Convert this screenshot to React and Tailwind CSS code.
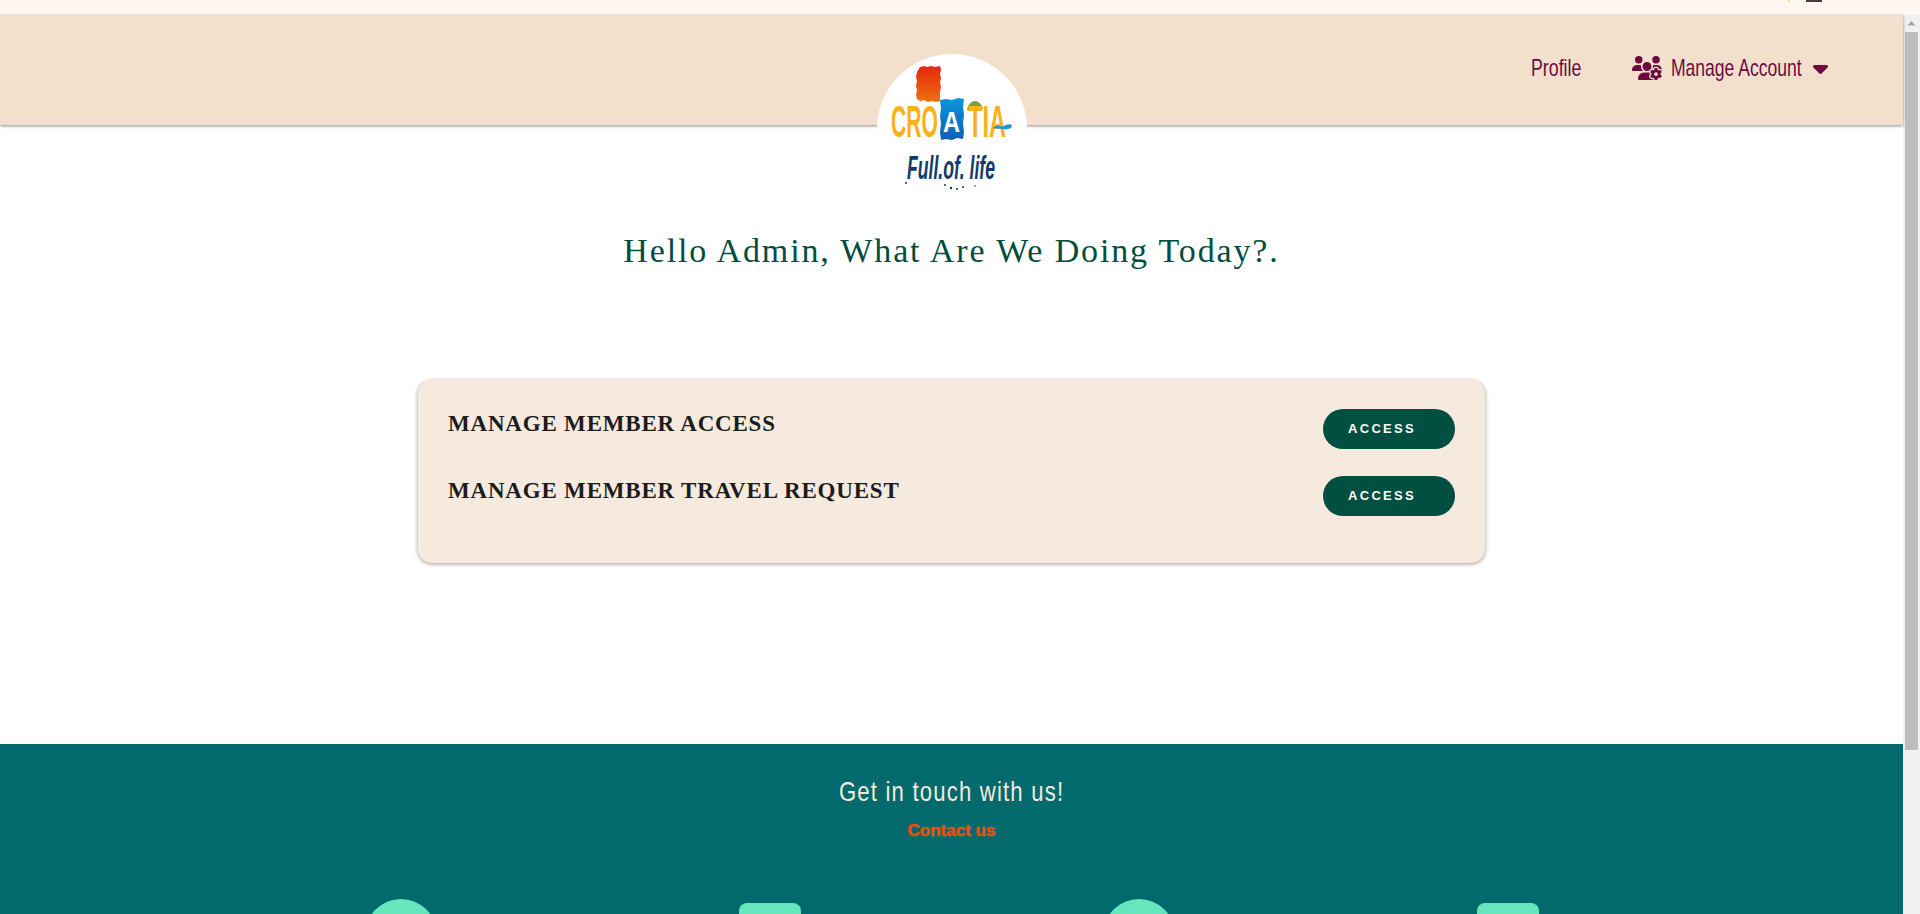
import { FaUsersGear, FaCaretDown } from 'react-icons/fa6'

const CroatiaLogo = () => {
    return (
        <svg viewBox="0 0 150 150" className="h-full w-full">
            <defs>
                <linearGradient id="redSquare" x1="0" y1="0" x2="0" y2="1">
                    <stop offset="0" stopColor="#e2280f" />
                    <stop offset="1" stopColor="#f0700f" />
                </linearGradient>
                <linearGradient id="blueSquare" x1="0" y1="0" x2="0" y2="1">
                    <stop offset="0" stopColor="#0a96dc" />
                    <stop offset="1" stopColor="#0b5fb8" />
                </linearGradient>
            </defs>
            <path d="M43 13l4-1 3 1 4-1 4 1 5-1 1 4-1 4 1 4-1 5 1 4-1 5 0 9-4 1-4-1-4 1-4-2-4 1-3-2-1-4 1-5-1-4 1-5-1-4 1-5z" fill="url(#redSquare)" />
            <path d="M63 46l6-1 6 1 6-2 6 1-1 8 1 8-1 8 1 9-1 7-6-1-5 2-6-1-5 1-1-8 1-8-1-8 1-8z" fill="url(#blueSquare)" />
            <path d="M90 56c1-6 5-9 8-9s7 3 8 8l-6 0-4 0z" fill="#76a03c" />
            <g fontFamily="'Liberation Sans', sans-serif" fontSize="44" fontWeight="700">
                <text x="14" y="83" fill="#fbb117" textLength="47" lengthAdjust="spacingAndGlyphs">CRO</text>
                <text x="66" y="78" fill="#ffffff" fontSize="30" textLength="17" lengthAdjust="spacingAndGlyphs">A</text>
                <text x="91" y="83" fill="#fbb117" textLength="38" lengthAdjust="spacingAndGlyphs">TIA</text>
            </g>
            <path d="M116 74c3-3 5-3 7-2s4 0 6-1 4-1 6 0l-1 3c-3 1-5 2-9 1s-6 0-9-1z" fill="#1b9ad6" />
            <text x="30" y="125" fill="#123a6b" fontFamily="'Liberation Sans', sans-serif" fontSize="33" fontStyle="italic" fontWeight="700" textLength="88" lengthAdjust="spacingAndGlyphs">Full.of. life</text>
            <g fill="#123a6b">
                <circle cx="29" cy="129" r="1" />
                <circle cx="68" cy="131" r="1" />
                <circle cx="74" cy="134" r="1.2" />
                <circle cx="80" cy="135" r="1" />
                <circle cx="86" cy="133" r="1" />
                <circle cx="98" cy="132" r="0.8" />
            </g>
        </svg>
    )
}

const AccessRow = ({ title }) => {
    return (
        <div className="flex h-[67px] items-start justify-between">
            <h3 className="font-['Liberation_Serif',serif] text-[23px] leading-[30px] font-bold tracking-[0.8px] text-[#1c1c1c]">{title}</h3>
            <button
                type="button"
                className="h-10 w-[132px] rounded-full bg-[#004f40] pl-[25px] text-left font-['Liberation_Sans',sans-serif] text-[13px] font-bold tracking-[2.3px] text-white"
            >
                ACCESS
            </button>
        </div>
    )
}

const App = () => {
    return (
        <div className="flex h-[914px] flex-col overflow-hidden bg-white">
            {/* Strip left from the section above */}
            <div className="relative h-[15px] shrink-0 bg-[#fff7f2]">
                <span className="absolute top-0 left-[1788px] h-[2px] w-[2px] bg-[#ffd9a0]"></span>
                <span className="absolute top-0 left-[1806px] h-[2px] w-[16px] bg-[#4a4038]"></span>
            </div>

            <div className="flex min-h-0 flex-1">
                <div className="min-w-0 flex-1">
                    <nav className="relative flex h-[110px] items-start justify-end bg-[#f2e0cc] pt-[38px] pr-[75px] font-['Liberation_Sans',sans-serif] text-[24px] leading-[30px] text-[#6d0a42] shadow-[0_1px_3px_rgba(0,0,0,0.45)]">
                        <div className="absolute top-[39px] left-[877px] h-[150px] w-[150px] rounded-full bg-white">
                            <CroatiaLogo />
                        </div>
                        <a className="mr-[51px] w-[50px] whitespace-nowrap">
                            <span className="inline-block origin-left scale-x-[0.74]">Profile</span>
                        </a>
                        <a className="flex items-center">
                            <FaUsersGear className="mr-[9px] h-[24px] w-[30px]" />
                            <span className="w-[131px] whitespace-nowrap">
                                <span className="inline-block origin-left scale-x-[0.73]">Manage Account</span>
                            </span>
                            <FaCaretDown className="ml-[11px] h-[24px] w-[15px]" />
                        </a>
                    </nav>

                    <h1 className="mt-[101px] text-center font-['Liberation_Serif',serif] text-[34px] leading-[50px] tracking-[1.85px] text-[#004d40]">
                        Hello Admin, What Are We Doing Today?.
                    </h1>

                    <section className="mx-auto mt-[104px] h-[183px] w-[1067px] rounded-[14px] bg-[#f6e9dd] px-[30px] pt-[29px] shadow-[0_1px_4px_rgba(0,0,0,0.4)]">
                        <AccessRow title="MANAGE MEMBER ACCESS" />
                        <AccessRow title="MANAGE MEMBER TRAVEL REQUEST" />
                    </section>

                    <footer className="mt-[181px] h-[400px] bg-[#026a6c] pt-[32px] text-center">
                        <h2 className="font-['Liberation_Sans',sans-serif] text-[28px] leading-[32px] tracking-[1.5px] text-[#f6e9dd]">
                            <span className="inline-block scale-x-[0.79]">Get in touch with us!</span>
                        </h2>
                        <p className="mt-[13px] font-['Liberation_Sans',sans-serif] text-[17px] leading-[20px] font-bold text-[#e8500f] [-webkit-text-stroke:0.5px_#e8500f]">
                            Contact us
                        </p>
                        <div className="mx-auto mt-[58px] grid w-[1482px] grid-cols-4 justify-items-center pl-[6px]">
                            <div className="h-[72px] w-[72px] rounded-full bg-[#66e6bc]"></div>
                            <div className="mt-1 h-[62px] w-[62px] rounded-lg bg-[#66e6bc]"></div>
                            <div className="h-[72px] w-[72px] rounded-full bg-[#66e6bc]"></div>
                            <div className="mt-1 h-[62px] w-[62px] rounded-lg bg-[#66e6bc]"></div>
                        </div>
                    </footer>
                </div>

                {/* Scrollbar */}
                <aside className="flex w-[17px] shrink-0 flex-col items-center bg-[#f1f1f1]">
                    <svg viewBox="0 0 17 17" className="h-[17px] w-[17px] shrink-0">
                        <path d="M8.5 6l4 4.5h-8z" fill="#a3a3a3" />
                    </svg>
                    <div className="h-[718px] w-[13px] bg-[#bdbdbd]"></div>
                </aside>
            </div>
        </div>
    )
}

export default App
